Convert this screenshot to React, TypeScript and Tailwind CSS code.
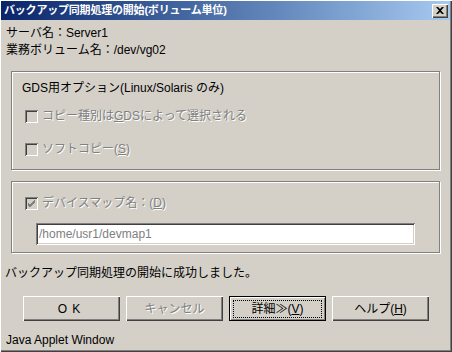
import type { ReactNode } from "react";

const raised =
  "shadow-[inset_1px_1px_#ffffff,inset_-1px_-1px_#404040,inset_-2px_-2px_#808080]";
const sunken =
  "shadow-[inset_1px_1px_#808080,inset_-1px_-1px_#ffffff,inset_2px_2px_#404040,inset_-2px_-2px_#d4d0c8]";
const etched =
  "border border-[#808080] shadow-[inset_1px_1px_#ffffff,1px_1px_#ffffff]";
const disabledText = "text-[#808080] [text-shadow:1px_1px_0_#ffffff]";

const Check = ({ checked, label }: { checked?: boolean; label: ReactNode }) => (
  <div className="flex h-4 items-center">
    <div className={`flex h-[13px] w-[13px] items-center justify-center bg-[#d4d0c8] ${sunken}`}>
      {checked && (
        <svg width="9" height="9" viewBox="0 0 9 9">
          <path d="M1 4 L3 6 L8 1 M1 5 L3 7 L8 2 M1 6 L3 8 L8 3" stroke="#808080" strokeWidth="1" fill="none" />
        </svg>
      )}
    </div>
    <span className={`ml-1 text-[12px] leading-4 ${disabledText}`}>{label}</span>
  </div>
);

const Button = ({
  children,
  disabled,
  isDefault,
}: {
  children: ReactNode;
  disabled?: boolean;
  isDefault?: boolean;
}) => (
  <div
    className={`flex h-[25px] w-[97px] items-center justify-center bg-[#d4d0c8] text-[12px] ${
      isDefault
        ? "border border-black shadow-[inset_1px_1px_#ffffff,inset_-1px_-1px_#808080]"
        : raised
    } ${disabled ? disabledText : "text-black"}`}
  >
    {isDefault ? (
      <div className="flex h-[18px] w-[89px] items-center justify-center border border-dotted border-black">
        {children}
      </div>
    ) : (
      children
    )}
  </div>
);

export default function App() {
  return (
    <div className="flex h-[352px] w-[452px] flex-col bg-[#d4d0c8] font-['Liberation_Sans','Noto_Sans_CJK_JP',sans-serif] text-black shadow-[inset_1px_1px_#ffffff,inset_-1px_-1px_#404040,inset_-2px_-2px_#808080]">
      {/* タイトルバー */}
      <div className="ml-[1px] mr-[2px] mt-[1px] flex h-[19px] items-center justify-between bg-gradient-to-r from-[#0a246a] to-[#a6caf0] pl-[3px] pr-[2px]">
        <span className="text-[11px] font-bold leading-none tracking-[-0.2px] text-white">
          バックアップ同期処理の開始(ボリューム単位)
        </span>
        <div className={`flex h-[14px] w-[16px] items-center justify-center bg-[#d4d0c8] ${raised}`}>
          <svg width="8" height="7" viewBox="0 0 8 7">
            <path d="M0 0h2l2 2 2-2h2L5 3.5 8 7H6L4 5 2 7H0l3-3.5z" fill="#000" />
          </svg>
        </div>
      </div>

      <div className="mt-[5px] pl-[6px] text-[12px] leading-[17px]">
        <div>サーバ名：Server1</div>
        <div>業務ボリューム名：/dev/vg02</div>
      </div>

      {/* GDS オプション */}
      <div className={`ml-[11px] mt-[12px] h-[99px] w-[429px] ${etched}`}>
        <div className="ml-[10px] mt-[8px] text-[12px] leading-4">
          GDS用オプション(Linux/Solaris のみ)
        </div>
        <div className="ml-[13px] mt-[12px]">
          <Check
            label={
              <>
                コピー種別は<span className="underline">G</span>DSによって選択される
              </>
            }
          />
        </div>
        <div className="ml-[13px] mt-[17px]">
          <Check
            label={
              <>
                ソフトコピー(<span className="underline">S</span>)
              </>
            }
          />
        </div>
      </div>

      {/* デバイスマップ */}
      <div className={`ml-[11px] mt-[11px] h-[72px] w-[429px] ${etched}`}>
        <div className="ml-[13px] mt-[13px]">
          <Check
            checked
            label={
              <>
                デバイスマップ名：(<span className="underline">D</span>)
              </>
            }
          />
        </div>
        <div
          className={`ml-[24px] mt-[12px] flex h-[22px] w-[379px] items-center bg-white pl-[3px] text-[12px] text-[#808080] ${sunken}`}
        >
          /home/usr1/devmap1
        </div>
      </div>

      <div className="mt-[12px] pl-[5px] text-[12px] leading-[17px]">
        バックアップ同期処理の開始に成功しました。
      </div>

      <div className="ml-[23px] mt-[14px] flex gap-[6px]">
        <Button>
          <span className="tracking-[5px]">OK</span>
        </Button>
        <Button disabled>キャンセル</Button>
        <Button isDefault>
          詳細≫(<span className="underline">V</span>)
        </Button>
        <Button>
          ヘルプ(<span className="underline">H</span>)
        </Button>
      </div>

      <div className="ml-[6px] mt-[12px] text-[12px] leading-[14px]">Java Applet Window</div>
    </div>
  );
}
